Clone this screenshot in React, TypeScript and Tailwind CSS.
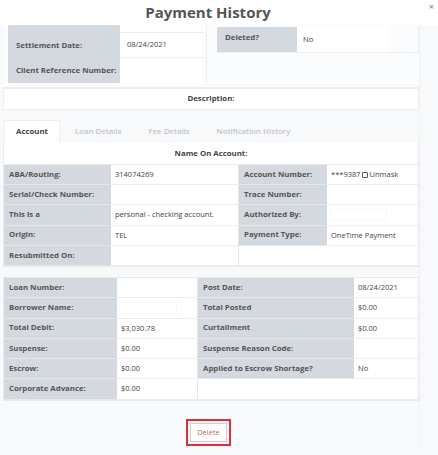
import React from 'react';

const font = { fontFamily: '"Open Sans", "Liberation Sans", sans-serif' };

type Cell = { label?: string; value?: React.ReactNode; blank?: boolean };

const Label: React.FC<{ children?: React.ReactNode; className?: string }> = ({ children, className = '' }) => (
  <div className={`bg-[#d3d9de] font-bold text-[#555] text-[7.8px] whitespace-nowrap flex items-center pl-[5px] border-b border-[#e4e7ea] ${className}`}>
    {children}
  </div>
);

const Value: React.FC<{ children?: React.ReactNode; className?: string }> = ({ children, className = '' }) => (
  <div className={`bg-white text-[#444] text-[7.5px] whitespace-nowrap flex items-center pl-[4px] border-b border-[#eceef0] ${className}`}>
    {children}
  </div>
);

const Redacted: React.FC<{ w: string }> = ({ w }) => (
  <span className={`inline-block h-[10px] ${w} bg-white shadow-[0_0_0_1px_#f8f8f9]`} />
);

const accountRows: [Cell, Cell][] = [
  [{ label: 'ABA/Routing:', value: '314074269' }, {
    label: 'Account Number:',
    value: (
      <span className="flex items-center gap-[1px]">
        ***9387
        <span className="inline-block w-[6px] h-[6px] border border-[#555] rounded-[1px] bg-white" />
        <span className="ml-[1px]">Unmask</span>
      </span>
    ),
  }],
  [{ label: 'Serial/Check Number:', value: '' }, { label: 'Trace Number:', value: '' }],
  [{ label: 'This is a', value: 'personal - checking account.' }, { label: 'Authorized By:', value: <Redacted w="w-[55px]" /> }],
  [{ label: 'Origin:', value: 'TEL' }, { label: 'Payment Type:', value: 'OneTime Payment' }],
  [{ label: 'Resubmitted On:', value: '' }, { blank: true }],
];

const loanRows: [Cell, Cell][] = [
  [{ label: 'Loan Number:', value: '' }, { label: 'Post Date:', value: '08/24/2021' }],
  [{ label: 'Borrower Name:', value: <span className="flex items-center"><span className="text-[6px] text-[#999] mr-[-2px]">'</span><Redacted w="w-[56px]" /></span> }, { label: 'Total Posted', value: '$0.00' }],
  [{ label: 'Total Debit:', value: '$3,030.78' }, { label: 'Curtailment', value: '$0.00' }],
  [{ label: 'Suspense:', value: '$0.00' }, { label: 'Suspense Reason Code:', value: '' }],
  [{ label: 'Escrow:', value: '$0.00' }, { label: 'Applied to Escrow Shortage?', value: 'No' }],
  [{ label: 'Corporate Advance:', value: '$0.00' }, { blank: true }],
];

const DataTable: React.FC<{ rows: [Cell, Cell][]; cols: string; rowH: string }> = ({ rows, cols, rowH }) => (
  <div className={`grid ${cols} border border-[#e8eaed] bg-white`}>
    {rows.map(([a, b], i) => (
      <React.Fragment key={i}>
        <Label className={rowH}>{a.label}</Label>
        <Value className={`${rowH} border-r border-r-[#e4e7ea]`}>{a.value}</Value>
        {b.blank ? (
          <div className={`col-span-2 bg-white border-b border-[#eceef0] ${rowH}`} />
        ) : (
          <>
            <Label className={rowH}>{b.label}</Label>
            <Value className={rowH}>{b.value}</Value>
          </>
        )}
      </React.Fragment>
    ))}
  </div>
);

export default function App() {
  return (
    <div style={font} className="w-[438px] h-[455px] bg-[#f8f9fb] overflow-hidden relative">
      <div className="h-[25px] bg-white flex items-center justify-center pr-[22px]">
        <h1 className="text-[15px] font-bold text-[#555] leading-none mt-[-1px]">Payment History</h1>
      </div>
      <span className="absolute right-[4px] top-[2px] text-[9px] text-[#777] leading-none">×</span>

      <div className="w-[417px] ml-[3px] border-r border-[#eef0f2]">
        {/* top summary */}
        <div className="flex h-[63px] bg-[#fbfcfd] border-b border-[#eceef0]">
          <div className="w-[204px] pl-[5px] border-r border-[#eceef0] h-[58px]">
            <div className="grid grid-cols-[112px_85px]">
              <Label className="h-[8px] border-b-0" />
              <Value className="h-[8px] border-b border-[#eceef0]" />
              <Label className="h-[25px] border-b-0 pl-[8px]">Settlement Date:</Label>
              <Value className="h-[25px] pl-[7px]">08/24/2021</Value>
              <Label className="h-[25px] border-b-0 pl-[8px]">Client Reference Number:</Label>
              <Value className="h-[25px] border-b-0" />
            </div>
          </div>
          <div className="flex-1 pl-[10px] pt-[2px]">
            <div className="grid grid-cols-[80px_91px] h-[26px] border-b border-r border-[#eceef0]">
              <Label className="items-start pt-[5px] pl-[8px] border-b-0">Deleted?</Label>
              <Value className="pl-[6px] border-b-0">No</Value>
            </div>
          </div>
        </div>
        <div className="h-[22px] bg-white border border-[#eceef0] flex items-center justify-center text-[7.8px] font-bold text-[#444]">
          Description:
        </div>

        {/* tabs */}
        <div className="flex items-end h-[33px] pl-[1px]">
          <div className="h-[23px] w-[56px] bg-white border border-b-0 border-[#eceef0] flex items-center justify-center text-[7.8px] font-bold text-[#444]">
            Account
          </div>
          <div className="h-[23px] flex items-center text-[7.8px] font-semibold text-[#c2c5c9] whitespace-nowrap">
            <span className="ml-[15px]">Loan Details</span>
            <span className="ml-[27px]">Fee Details</span>
            <span className="ml-[27px]">Notification History</span>
          </div>
        </div>
        <div className="h-[21px] bg-white border-x border-[#e8eaed] flex items-center justify-center text-[7.8px] font-bold text-[#444]">
          Name On Account:
        </div>
        <DataTable rows={accountRows} cols="grid-cols-[107px_128px_88px_1fr]" rowH="h-[20.2px]" />

        <div className="h-[10px]" />
        <DataTable rows={loanRows} cols="grid-cols-[113px_81px_156px_1fr]" rowH="h-[20.3px]" />

        <div className="flex justify-center mt-[18px]">
          <div className="ml-[-5px] border-2 border-[#d9303c] p-[2px]">
            <button className="h-[19px] w-[37px] bg-white border border-[#e3c6c8] text-[7.5px] text-[#c46a70] flex items-center justify-center">
              Delete
            </button>
          </div>
        </div>
      </div>
    </div>
  );
}
